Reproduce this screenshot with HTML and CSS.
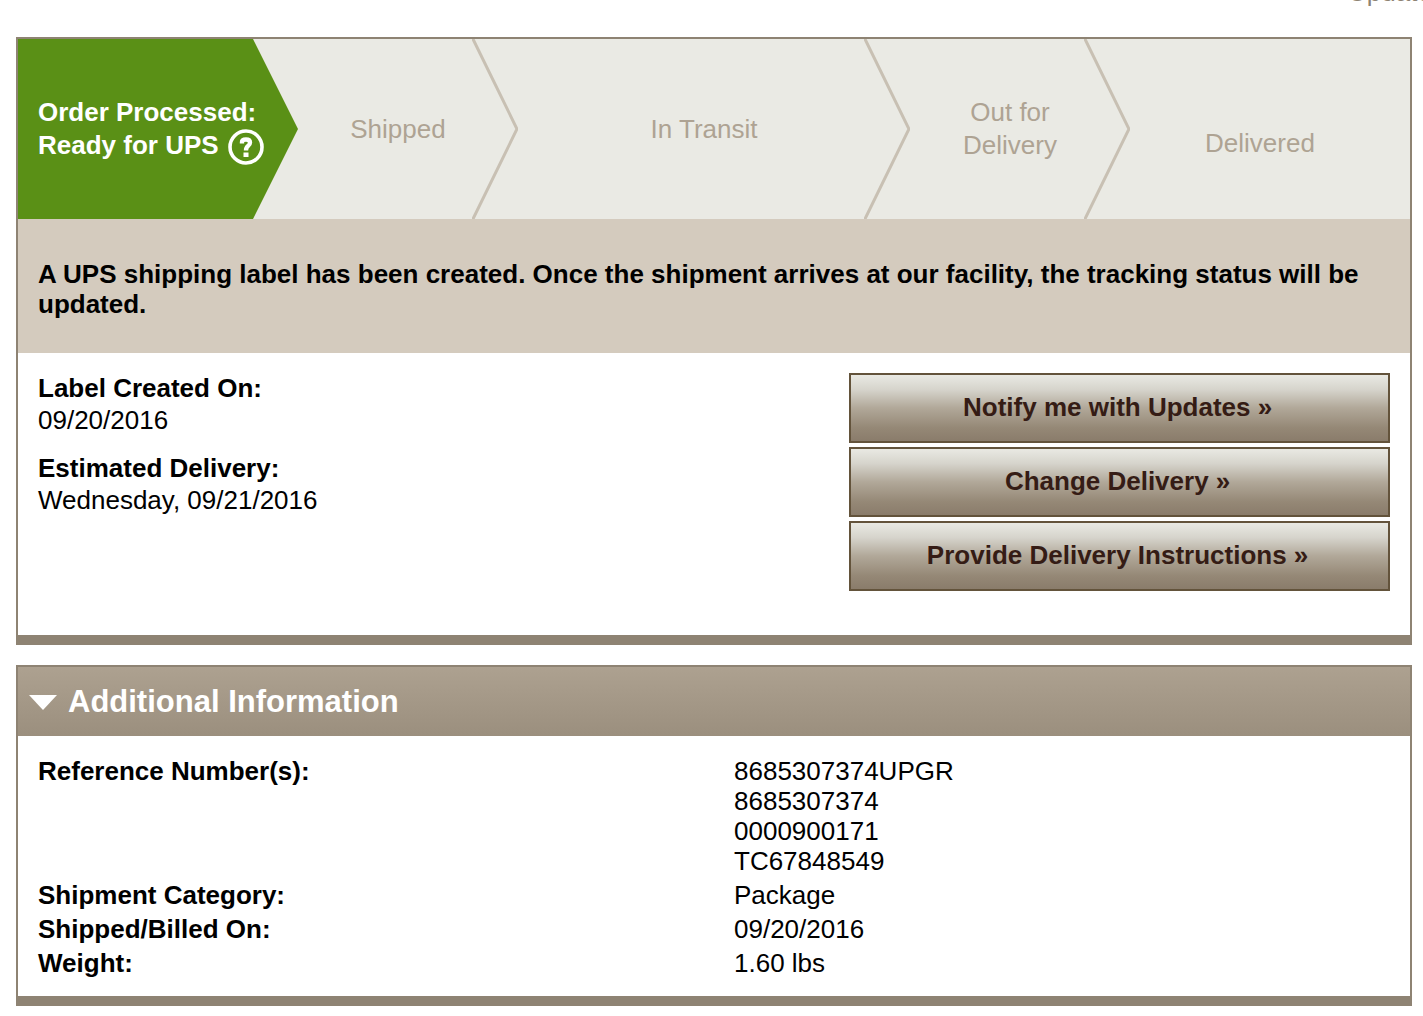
FILE: index.html
```html
<!DOCTYPE html>
<html lang="en">
<head>
<meta charset="utf-8">
<title>Package Tracking</title>
<link rel="stylesheet" href="styles.css">
</head>
<body>
<main class="page">
  <p class="updated">Updated:</p>

  <section class="panel">
    <ol class="steps">
      <li class="step step-current">
        <span class="step-text">Order Processed: Ready for UPS
          <button class="help" type="button" aria-label="Help">
            <svg viewBox="0 0 36 36" width="36" height="36" aria-hidden="true">
              <circle cx="18" cy="18" r="16" fill="none" stroke="#fff" stroke-width="3.600"/>
              <path d="M14 14.500V13Q14 10.500 18 10.500T22 13.500Q22 15.500 20 17T18 21.500" fill="none" stroke="#fff" stroke-width="4.400"/>
              <rect x="15.500" y="23.500" width="5" height="4.500" fill="#fff"/>
            </svg>
          </button>
        </span>
        <svg class="chevron" viewBox="0 0 46 180" preserveAspectRatio="none" aria-hidden="true">
          <path d="M1 0H46V180H1L46 90Z" fill="#eaeae4"/>
        </svg>
      </li>
      <li class="step">
        <span class="step-text">Shipped</span>
        <svg class="chevron" viewBox="0 0 46 180" preserveAspectRatio="none" aria-hidden="true">
          <path d="M0 -2L45 90L0 182" fill="none" stroke="#c8c0b3" stroke-width="3"/>
        </svg>
      </li>
      <li class="step">
        <span class="step-text">In Transit</span>
        <svg class="chevron" viewBox="0 0 46 180" preserveAspectRatio="none" aria-hidden="true">
          <path d="M0 -2L45 90L0 182" fill="none" stroke="#c8c0b3" stroke-width="3"/>
        </svg>
      </li>
      <li class="step">
        <span class="step-text">Out for Delivery</span>
        <svg class="chevron" viewBox="0 0 46 180" preserveAspectRatio="none" aria-hidden="true">
          <path d="M0 -2L45 90L0 182" fill="none" stroke="#c8c0b3" stroke-width="3"/>
        </svg>
      </li>
      <li class="step step-last">
        <span class="step-text">Delivered</span>
      </li>
    </ol>

    <p class="notice">A UPS shipping label has been created. Once the shipment arrives at our facility, the tracking status will be updated.</p>

    <div class="summary">
      <dl class="dates">
        <div>
          <dt>Label Created On:</dt>
          <dd>09/20/2016</dd>
        </div>
        <div>
          <dt>Estimated Delivery:</dt>
          <dd>Wednesday, 09/21/2016</dd>
        </div>
      </dl>
      <div class="actions">
        <button class="action" type="button">Notify me with Updates »</button>
        <button class="action" type="button">Change Delivery »</button>
        <button class="action" type="button">Provide Delivery Instructions »</button>
      </div>
    </div>
  </section>

  <section class="panel">
    <h2 class="panel-title">
      <svg viewBox="0 0 28 16" width="28" height="16" aria-hidden="true"><path d="M0 1H28L14 16Z" fill="#fff"/></svg>
      Additional Information
    </h2>
    <table class="details">
      <tbody>
        <tr>
          <th scope="row">Reference Number(s):</th>
          <td>8685307374UPGR<br>8685307374<br>0000900171<br>TC67848549</td>
        </tr>
        <tr>
          <th scope="row">Shipment Category:</th>
          <td>Package</td>
        </tr>
        <tr>
          <th scope="row">Shipped/Billed On:</th>
          <td>09/20/2016</td>
        </tr>
        <tr>
          <th scope="row">Weight:</th>
          <td>1.60 lbs</td>
        </tr>
      </tbody>
    </table>
  </section>
</main>
</body>
</html>
```
FILE: styles.css
```css
* {
  box-sizing: border-box;
}

body {
  margin: 0;
  background: #fff;
  color: #000;
  font: 26px/30px "Liberation Sans", Arial, sans-serif;
  overflow-x: hidden;
}

p, h2, ol, dl, dd {
  margin: 0;
  padding: 0;
}

.page {
  display: flow-root;
  padding: 0 11px 10px 16px;
}

.updated {
  width: 64px;
  margin: -23px 0 30px auto;
  color: #8e8373;
  white-space: nowrap;
}

.panel {
  border: 2px solid #8e8373;
  border-bottom-width: 10px;
}

.panel + .panel {
  margin-top: 20px;
}

.steps {
  display: grid;
  grid-template-columns: 280fr 220fr 392fr 220fr 280fr;
  min-height: 180px;
  background: #eaeae4;
  list-style: none;
}

.step {
  position: relative;
  display: flex;
  align-items: center;
  justify-content: center;
  padding: 0 46px 0 26px;
  color: #aea393;
  line-height: 33px;
  text-align: center;
}

.step-current {
  justify-content: flex-start;
  padding: 0 26px 0 20px;
  background: #5a9016;
  color: #fff;
  font-weight: bold;
  text-align: left;
}

.step-last {
  align-items: flex-start;
  padding: 88px 20px 0 0;
}

/* Arrow tip at the end of a step. */
.chevron {
  position: absolute;
  top: 0;
  right: 0;
  width: 46px;
  height: 100%;
}

.help {
  margin: -6px 0 -6px 2px;
  padding: 0;
  border: 0;
  background: none;
  vertical-align: middle;
}

.help svg {
  display: block;
}

.notice {
  padding: 40px 20px 34px;
  background: #d4cbbe;
  font-weight: bold;
}

.summary {
  display: flex;
  justify-content: space-between;
  padding: 20px 20px 44px;
}

.dates {
  display: grid;
  gap: 18px;
  align-content: start;
}

.dates div {
  display: grid;
  gap: 2px;
}

.dates dt {
  font-weight: bold;
}

.actions {
  display: grid;
  gap: 4px;
  width: 40%;
}

.action {
  height: 70px;
  padding: 0 4px 2px 0;
  border: 2px solid #63533b;
  border-radius: 0;
  background: linear-gradient(#e9e9e3, #d6d4cc 22%, #b1a899 50%, #958876 80%, #8a7c6b);
  color: #351c15;
  font: bold 26px/30px "Liberation Sans", Arial, sans-serif;
}

.panel-title {
  display: flex;
  align-items: center;
  gap: 11px;
  min-height: 69px;
  padding: 0 11px;
  background: linear-gradient(#ada190, #9b8f7e);
  color: #fff;
  font-size: 31px;
}

.details {
  width: 100%;
  margin: 18px 0 16px;
  border-collapse: collapse;
}

.details th,
.details td {
  width: 50%;
  padding: 2px 20px;
  text-align: left;
  vertical-align: top;
}
```
